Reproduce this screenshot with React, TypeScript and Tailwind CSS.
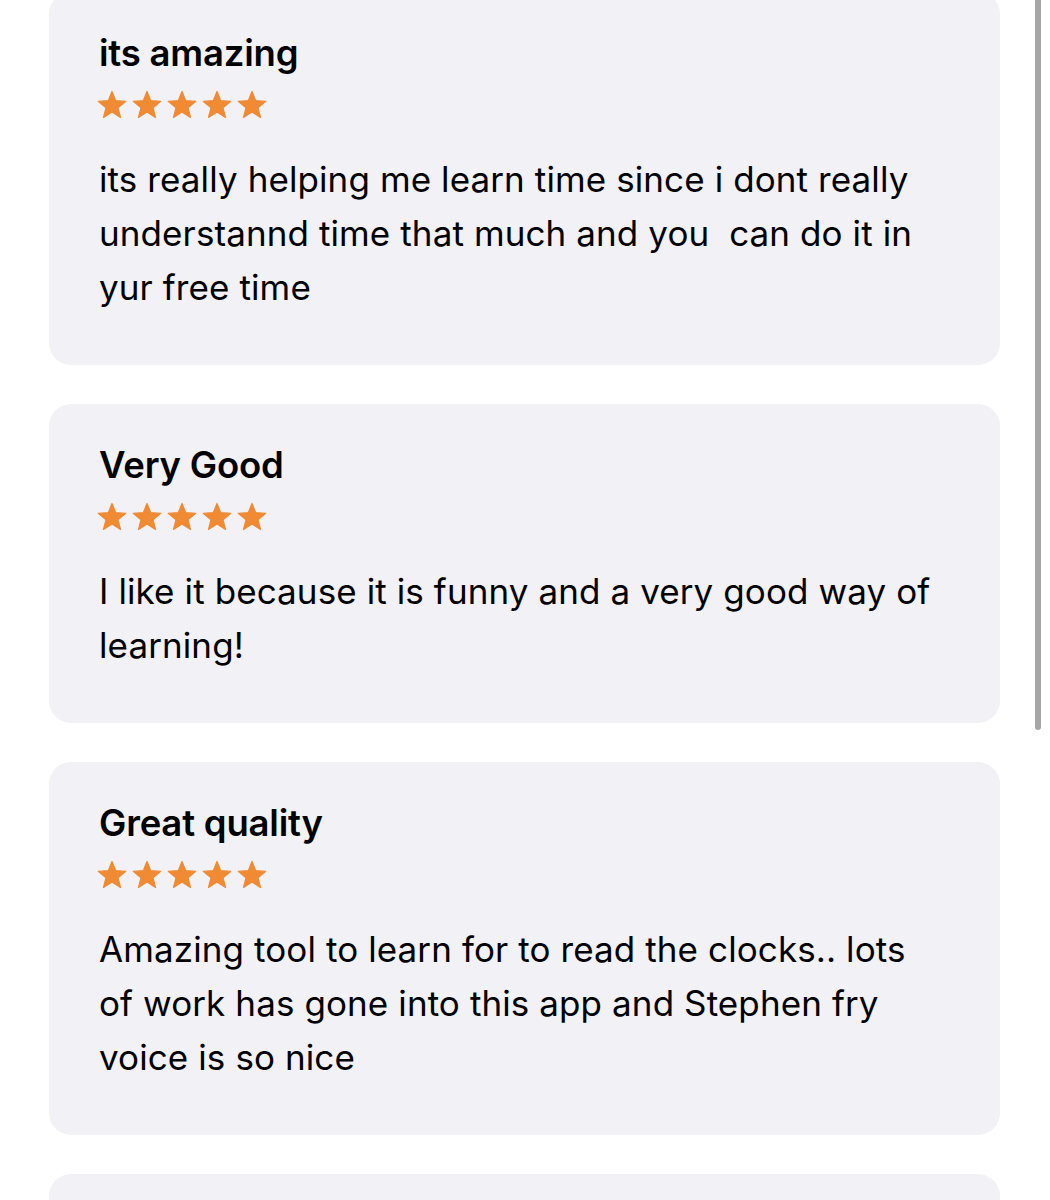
import React from 'react';

const reviews = [
  {
    title: 'its amazing',
    body: 'its really helping me learn time since i dont really understannd time that much and you  can do it in yur free time',
  },
  {
    title: 'Very Good',
    body: 'I like it because it is funny and a very good way of learning!',
  },
  {
    title: 'Great quality',
    body: 'Amazing tool to learn for to read the clocks.. lots of work has gone into this app and Stephen fry voice is so nice',
  },
  { title: '', body: '' },
];

const Star = () => (
  <svg width="30" height="30" viewBox="0 0 24 24" className="text-[#f08a33]">
    <path
      d="M12 1.2L14.94 8.55L23 9.1L16.76 14.15L18.8 21.9L12 17.6L5.2 21.9L7.24 14.15L1 9.1L9.06 8.55Z"
      fill="currentColor"
      stroke="currentColor"
      strokeWidth="1"
      strokeLinejoin="round"
    />
  </svg>
);

const ReviewCard = ({ title, body }: { title: string; body: string }) => (
  <div className="rounded-[22px] bg-[#f1f1f6] pl-[50px] pr-[61px] pt-[41px] pb-[51px]">
    <h3 className="text-[36.5px] leading-[40px] font-semibold text-black tracking-[-0.2px]">{title}</h3>
    <div className="mt-[17px] -ml-[2px] flex gap-[5px]">
      {[0, 1, 2, 3, 4].map((i) => (
        <Star key={i} />
      ))}
    </div>
    <p className="mt-[32px] text-[35px] leading-[54px] tracking-[0.1px] text-black whitespace-pre-wrap">{body}</p>
  </div>
);

const App = () => {
  return (
    <div
      className="relative h-[1200px] w-[1050px] overflow-hidden bg-white"
      style={{ fontFamily: 'Inter, "Noto Sans", sans-serif' }}
    >
      <div className="-mt-[8px] ml-[49px] flex w-[951px] flex-col gap-[39px]">
        {reviews.map((r, i) => (
          <ReviewCard key={i} title={r.title} body={r.body} />
        ))}
      </div>
      {/* scrollbar */}
      <div className="absolute right-[9px] top-0 h-[730px] w-[6px] rounded-b-full bg-[#a6a6a6]" />
    </div>
  );
};

export default App;
